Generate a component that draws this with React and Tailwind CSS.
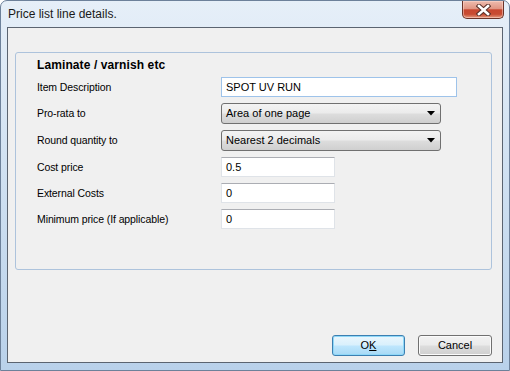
export default function App() {
  const rows = [
    { label: "Item Description", type: "input", value: "SPOT UV RUN", w: "w-[236px]", h: "h-[20px]", focus: true },
    { label: "Pro-rata to", type: "combo", value: "Area of one page", w: "w-[220px]", h: "h-[21px]" },
    { label: "Round quantity to", type: "combo", value: "Nearest 2 decimals", w: "w-[220px]", h: "h-[21px]" },
    { label: "Cost price", type: "input", value: "0.5", w: "w-[114px]", h: "h-[20px]" },
    { label: "External Costs", type: "input", value: "0", w: "w-[114px]", h: "h-[20px]" },
    { label: "Minimum price (If applicable)", type: "input", value: "0", w: "w-[114px]", h: "h-[20px]" },
  ];

  return (
    <div className="w-[510px] h-[371px] flex flex-col overflow-hidden rounded-t-[7px] border border-[#6d819a] bg-[linear-gradient(180deg,#e6eff8_0%,#d5e4f3_35%,#c6daee_70%,#b9d1ea_100%)] font-['Liberation_Sans',Arial,sans-serif] text-black">
      {/* TITLE BAR */}
      <div className="h-[26px] flex justify-between items-start shrink-0">
        <div className="pl-[7px] pt-[5px] text-[12px] leading-[16px] text-[#1a1a1a]">
          Price list line details.
        </div>
        <div className="mr-[5px] w-[42px] h-[18px] flex items-center justify-center rounded-b-[5px] border border-t-0 border-[#6a3328] bg-[linear-gradient(180deg,#eebcae_0%,#e09583_45%,#c8472f_52%,#c84c32_78%,#e59c80_100%)] shadow-[inset_0_0_0_1px_rgba(255,220,210,0.5)]">
          <svg width="15" height="12" viewBox="0 0 15 12">
            <path d="M3 2 L12 10 M12 2 L3 10" stroke="#5a3129" strokeWidth="4.6" strokeLinecap="square" />
            <path d="M3 2 L12 10 M12 2 L3 10" stroke="#ffffff" strokeWidth="2.6" strokeLinecap="square" />
          </svg>
        </div>
      </div>

      {/* CLIENT AREA */}
      <div className="mx-[6px] mb-[7px] h-[336px] flex flex-col border border-[#5b6470] bg-[#f0f0f0] pl-[7px] pr-[10px] pt-[24px] pb-[6px]">
        {/* GROUP BOX */}
        <div className="h-[218px] rounded-[3px] border border-[#adc3dc] pl-[21px] pt-[6px]">
          <div className="text-[12px] font-bold leading-[13px] tracking-[0.1px]">Laminate / varnish etc</div>

          <div className="mt-[5px] flex flex-col gap-[6px]">
            {rows.map((r) => (
              <div key={r.label} className={`flex items-center ${r.h}`}>
                <div className="w-[184px] text-[10.5px] leading-[13px] tracking-[-0.1px]">{r.label}</div>

                {r.type === "input" ? (
                  <div
                    className={`${r.w} ${r.h} flex items-center bg-white pl-[4px] text-[11px] border ${
                      r.focus
                        ? "border-[#9ec3ea]"
                        : "border-[#dfe3e8] border-t-[#abadb3]"
                    }`}
                  >
                    {r.value}
                  </div>
                ) : (
                  <div className={`${r.w} ${r.h} flex items-center justify-between rounded-[3px] border border-[#707070] bg-[linear-gradient(180deg,#f3f3f3_0%,#ebebeb_48%,#dddddd_52%,#cfcfcf_100%)] pl-[4px] pr-[5px] text-[11px]`}>
                    <span>{r.value}</span>
                    <svg width="8" height="5" viewBox="0 0 8 5">
                      <path d="M0 0 L8 0 L4 4.5 Z" fill="#000" />
                    </svg>
                  </div>
                )}
              </div>
            ))}
          </div>
        </div>

        {/* BUTTONS */}
        <div className="mt-auto flex justify-end gap-[13px]">
          <button className="w-[73px] h-[21px] rounded-[3px] border border-[#3c7fb1] bg-[linear-gradient(180deg,#eaf6fd_0%,#d9f0fc_48%,#bee6fd_52%,#a7d9f5_100%)] shadow-[inset_0_0_0_1px_#8fd8f8] text-[11px] leading-[13px]">
            O<span className="underline">K</span>
          </button>
          <button className="w-[74px] h-[21px] rounded-[3px] border border-[#707070] bg-[linear-gradient(180deg,#f2f2f2_0%,#ebebeb_48%,#dddddd_52%,#cfcfcf_100%)] shadow-[inset_0_0_0_1px_#fbfbfb] text-[11px] leading-[13px]">
            Cancel
          </button>
        </div>
      </div>
    </div>
  );
}
